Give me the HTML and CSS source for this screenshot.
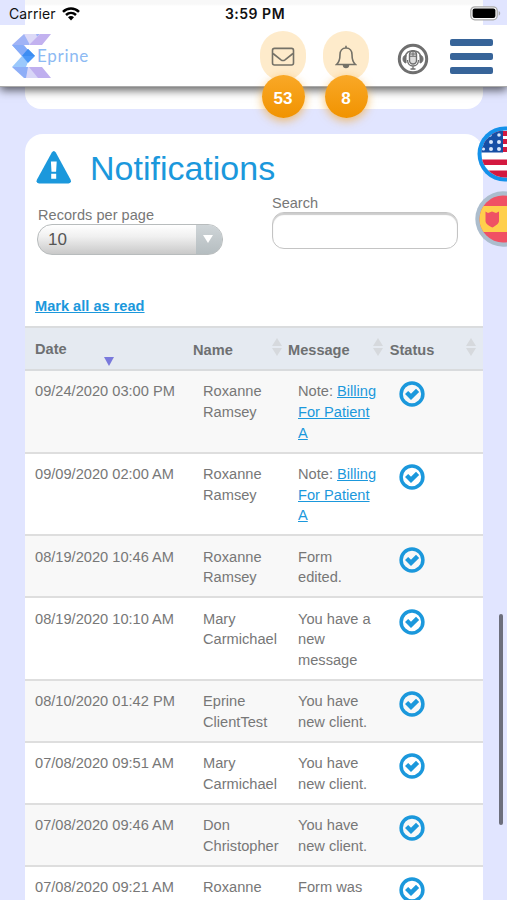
FILE: index.html
```
<!DOCTYPE html>
<html lang="en">
<head>
<meta charset="utf-8">
<title>Eprine - Notifications</title>
<link rel="stylesheet" href="styles.css">
</head>
<body>
<svg class="defs" aria-hidden="true">
  <symbol id="check" viewBox="0 0 26 26"><circle cx="13" cy="13" r="10.9" fill="none" stroke="#1b98dc" stroke-width="3.5"/><path d="M7.600 11.500 12 15.800 18.600 9.400" fill="none" stroke="#1b98dc" stroke-width="4.500"/></symbol>
  <symbol id="sort" viewBox="0 0 10 18"><path d="M5 0 10 8H0zM5 18 0 10h10z" fill="#d6d9dd"/></symbol>
</svg>
<div class="screen">
  <header class="top">
    <div class="status-bar">
      <div class="carrier"><span>Carrier</span>
        <svg width="18" height="14" viewBox="0 0 18 14" fill="none" stroke="#000" stroke-width="2.5"><path d="M1 4.8C5.5.5 12.5.5 17 4.8M4 8c2.900-2.700 7.100-2.700 10 0"/><path d="M6 10.200c1.800-1.500 4.200-1.500 6 0L9 13.400z" fill="#000" stroke="none"/></svg>
      </div>
      <div class="time">3:59 PM</div>
      <svg class="battery" width="31" height="15" viewBox="0 0 31 15"><rect x=".8" y=".8" width="26.400" height="13" rx="4" fill="#fff" stroke="#aaa" stroke-width="1.300"/><rect x="2.600" y="2.600" width="22.800" height="9.400" rx="2"/><path d="M28.700 5v4.600c2-.8 2-3.800 0-4.600z" fill="#aaa"/></svg>
    </div>
    <div class="nav">
      <div class="logo">
        <svg width="40" height="44" viewBox="0 0 40 44">
          <path d="M12 0h16L17 11h-5L16 16 10 22 0 11z" fill="#a0b3f6"/><path d="M12 0 18 11H28L24 0z" fill="#dcd9f7"/><path d="M28 0h11l-9 11H17z" fill="#c2b1ef"/>
          <path d="M0 11 10 22 16 16 11 11z" fill="#86acf8"/><path d="M10 22 0 33h14l2-5z" fill="#9bc9fc"/>
          <path d="M0 33h28v11H12z" fill="#8eaef7"/><path d="M16 33h12v11H14z" fill="#d8d6f7"/><path d="M17 33h13l9 11H26z" fill="#bfafef"/>
          <path d="M10 22 16 15 23 22 16 29z" fill="#4b98f8"/><path d="M16 15 23 22H10z" fill="#3d8df2"/>
        </svg><span>Eprine</span>
      </div>
      <div class="alert mail">
        <svg width="24" height="20" viewBox="0 0 24 20" fill="none" stroke="#747167" stroke-width="1.600"><rect x="1.500" y="1.400" width="21" height="16.600" rx="2"/><path d="m2 6.500 8 6.300q2 1.400 4 0l8-6.300"/></svg>
        <span class="badge">53</span>
      </div>
      <div class="alert bell">
        <svg width="22" height="24" viewBox="0 0 22 24" fill="none" stroke="#747167" stroke-width="1.600"><path d="M11 3C7 3 5 6 5 9.500c0 5.500-1 8-3.500 10h19C18 17.500 17 15 17 9.500 17 6 15 3 11 3z"/><path d="M11 3V.8"/><path d="M8.500 20c.3 3.300 4.700 3.300 5 0z" fill="#747167"/></svg>
        <span class="badge">8</span>
      </div>
      <svg class="mic" width="32" height="32" viewBox="0 0 32 32" fill="none" stroke="#6f6f6f"><circle cx="16" cy="16" r="13.700" stroke-width="3"/><path d="M8.500 14c0-8.500 15-8.500 15 0" stroke-width="1.500"/><path d="M9 12v8c-4-.5-4-7.500 0-8zM23 12v8c4-.5 4-7.500 0-8z" fill="#6f6f6f"/><rect x="12.500" y="8" width="7" height="13" rx="3.500" fill="#ddd" stroke-width="1.400"/><path d="M13 11h6M13 13.300h6M16 8v5" stroke-width="1"/><path d="M10.500 17c0 8 11 8 11 0M16 23v3M13.500 26h5" stroke-width="1.300"/></svg>
      <div class="menu"><i></i><i></i><i></i></div>
    </div>
  </header>

  <nav class="langs">
    <svg width="56" height="56" viewBox="0 0 56 56">
      <defs><clipPath id="round"><circle cx="28" cy="28" r="23.500"/></clipPath></defs>
      <circle cx="28" cy="28" r="27.500" fill="#1491ea"/>
      <g clip-path="url(#round)"><path fill="#fff" d="M0 0h56v56H0z"/><path d="M0 5h56v5H0zM0 13h56v5H0zM0 21h56v5H0zM0 33.500h56v5.500H0zM0 44.500h56V56H0z" fill="#d31940"/><path d="M0 0h26v26.500H0z" fill="#164fa5"/><g fill="#d7e7fb"><circle cx="22" cy="9" r="1.800"/><circle cx="13" cy="9" r="1.800"/><circle cx="22" cy="16" r="2"/><circle cx="14" cy="16" r="2"/><circle cx="22" cy="23" r="2"/><circle cx="14" cy="23" r="2"/><circle cx="6.500" cy="23" r="1.600"/></g></g>
    </svg>
    <svg class="es" width="56" height="56" viewBox="0 0 56 56">
      <circle cx="28" cy="28" r="27.700" fill="#acbdcd"/>
      <g clip-path="url(#round)"><path fill="#f05164" d="M0 0h56v56H0z"/><path fill="#ffcf4c" d="M0 15h56v26H0z"/><path d="M10.500 20.500 13 22l4-1.500 4 1.500 3-1.500V30c0 3-4 5-6.500 6.500C14 35 10.500 33 10.500 30z" fill="#ef5264"/></g>
    </svg>
  </nav>

  <main class="content">
    <section class="card previous"></section>
    <section class="card">
      <h1><svg width="36" height="33" viewBox="0 0 36 33"><path d="M15.800 1.500q2-3 4 0L34.500 28.500q1.500 3.500-2 4H3q-3.500-.5-2-4z" fill="#1b98dc"/><path d="M14.900 10.500h5.800l-.6 10.300h-4.600zM15.200 22.800h5v4.900h-5z" fill="#fff"/></svg><span>Notifications</span></h1>
      <div class="filters">
        <div class="records"><label>Records per page</label>
          <div class="select"><span>10</span><b><svg width="10" height="8" viewBox="0 0 10 8"><path d="M0 0h10L5 8z" fill="#fff"/></svg></b></div>
        </div>
        <div class="search"><label for="q">Search</label><input id="q" type="text"></div>
      </div>
      <a class="mark" href="#">Mark all as read</a>
      <div class="table">
        <div class="head">
          <div class="date">Date<svg width="10" height="9" viewBox="0 0 10 9"><path d="M0 0h10L5 9z" fill="#7979dc"/></svg></div>
          <div>Name<svg class="sort"><use href="#sort"/></svg></div>
          <div>Message<svg class="sort"><use href="#sort"/></svg></div>
          <div>Status<svg class="sort"><use href="#sort"/></svg></div>
        </div>
        <div class="row"><div>09/24/2020 03:00 PM</div><div>Roxanne<br>Ramsey</div><div>Note: <a href="#">Billing<br>For Patient<br>A</a></div><svg class="check"><use href="#check"/></svg></div>
        <div class="row"><div>09/09/2020 02:00 AM</div><div>Roxanne<br>Ramsey</div><div>Note: <a href="#">Billing<br>For Patient<br>A</a></div><svg class="check"><use href="#check"/></svg></div>
        <div class="row"><div>08/19/2020 10:46 AM</div><div>Roxanne<br>Ramsey</div><div>Form<br>edited.</div><svg class="check"><use href="#check"/></svg></div>
        <div class="row"><div>08/19/2020 10:10 AM</div><div>Mary<br>Carmichael</div><div>You have a<br>new<br>message</div><svg class="check"><use href="#check"/></svg></div>
        <div class="row"><div>08/10/2020 01:42 PM</div><div>Eprine<br>ClientTest</div><div>You have<br>new client.</div><svg class="check"><use href="#check"/></svg></div>
        <div class="row"><div>07/08/2020 09:51 AM</div><div>Mary<br>Carmichael</div><div>You have<br>new client.</div><svg class="check"><use href="#check"/></svg></div>
        <div class="row"><div>07/08/2020 09:46 AM</div><div>Don<br>Christopher</div><div>You have<br>new client.</div><svg class="check"><use href="#check"/></svg></div>
        <div class="row"><div>07/08/2020 09:21 AM</div><div>Roxanne</div><div>Form was</div><svg class="check"><use href="#check"/></svg></div>
      </div>
    </section>
  </main>
  <div class="scrollbar"></div>
</div>
</body>
</html>
```

FILE: styles.css
```
* { box-sizing: border-box; }
body { margin: 0; font-family: "Liberation Sans", Arial, sans-serif; color: #777; }
svg { display: block; flex: none; }
.defs { position: absolute; width: 0; height: 0; }
.screen { position: relative; height: 900px; overflow: hidden; background: #e1e5ff; }

.top { position: absolute; z-index: 2; top: 0; left: 0; right: 0; height: 87px; }
.status-bar {
  position: relative; z-index: 1;
  height: 25px; padding: 2px 6px 0 9px;
  display: grid; grid-template-columns: 1fr auto 1fr; align-items: center;
  background: linear-gradient(#f8f8f8 4px, #fff 6px) 25px 0 / 458px 25px no-repeat #e1e5ff;
  color: #111; font-family: Inter, sans-serif;
}
.carrier { display: flex; align-items: center; gap: 6px; font-size: 14px; letter-spacing: .1px; }
.time { font-size: 14px; font-weight: 600; letter-spacing: .5px; }
.battery { justify-self: end; }
.nav { height: 62px; display: flex; background: #fff; box-shadow: 0 3px 9px rgba(0, 0, 0, .65); border-bottom: 1px solid #aaa; }
.logo { display: flex; width: 248px; padding: 9px 0 0 12px; }
.logo span { margin: 10px 0 0 -15px; font: 400 17px/24px Lato, sans-serif; letter-spacing: .7px; color: #8dbaf3; }
.alert { position: relative; width: 46px; height: 50px; margin: 6px 17px 0 0; border-radius: 23px; background: #feebcb; display: flex; justify-content: center; align-items: flex-start; }
.mail { margin-left: 12px; }
.mail > svg { margin-top: 16px; }
.bell > svg { margin-top: 14px; }
.badge {
  position: absolute; top: 44px; left: 1.500px; width: 43px; height: 43px; border-radius: 50%;
  background: linear-gradient(#f9a827, #f19300); box-shadow: 0 3px 10px rgba(245, 165, 40, .65);
  color: #fff; font-weight: 700; font-size: 17px; line-height: 48px; text-align: center;
}
.mic { margin: 18px 0 0 11px; }
.menu { width: 43px; margin: 14px 0 0 21px; display: flex; flex-direction: column; gap: 7px; }
.menu i { height: 7px; border-radius: 2px; background: #376499; }

.langs { position: absolute; z-index: 1; top: 126px; left: 477px; width: 56px; }
.langs .es { margin: 9px 0 0 -2px; }

.content { padding: 0 24px 0 25px; }
.card { background: #fff; border-radius: 18px 18px 0 0; height: 800px; }
.previous { height: 109px; margin-bottom: 25px; border-radius: 0 0 16px 16px; }
h1 { margin: 0; height: 62px; padding: 15px 0 0 11px; display: flex; gap: 18px; color: #1b98dc; font-weight: 400; font-size: 34px; line-height: 38px; }
h1 svg { margin-top: 2px; }
.filters { display: flex; gap: 49px; padding-left: 12px; }
.filters label { display: block; font-size: 14.500px; line-height: 15px; }
.records { width: 186px; padding-top: 12px; }
.records label { padding-left: 1px; letter-spacing: .05px; }
.search { width: 186px; }
.search input { display: block; width: 186px; height: 37px; margin: 1px 0 0; border: 1.500px solid #c4c4c4; border-radius: 12px; background: #fff; box-shadow: inset 0 2px 1px #ccc; }
.select { display: flex; justify-content: space-between; height: 31px; margin-top: 1px; border: 1px solid #b8bcbd; border-radius: 15px; overflow: hidden; background: linear-gradient(#fff, #f0f0f0 40%, #c9c9c9); }
.select span { padding-left: 10px; font-size: 17px; line-height: 30px; color: #555; }
.select b { width: 26px; padding: 10px 0 0 7px; background: linear-gradient(#cfd5d8, #b5bdc0); }
.mark { display: block; width: 110px; margin: 42px 0 0 10px; height: 29px; font-size: 14.600px; font-weight: 700; line-height: 18px; white-space: nowrap; }
a { color: #1b98dc; text-decoration: underline; text-underline-offset: 1px; text-decoration-thickness: 1px; }

.head, .row { display: grid; grid-template-columns: 168px 95px 101px 94px; }
.head { height: 45px; border-top: 2px solid #dadcde; border-bottom: 2px solid #d9dbdd; background: #e5eaf1; font-size: 14.600px; font-weight: 700; line-height: 20px; color: #6e7072; }
.head div { display: flex; justify-content: space-between; padding-top: 12px; }
.head .date { flex-direction: column; justify-content: flex-start; padding: 11px 0 0 10px; }
.date svg { margin: -2px 0 0 69px; }
.sort { width: 10px; height: 18px; margin: -2px 6px 0 0; }
.head div:nth-child(4) { padding-left: .7px; }
.head div:nth-child(4) .sort { margin-right: 7px; }
.row { padding: 10.400px 0 8.300px; border-bottom: 2px solid #dedede; font-size: 14.640px; line-height: 20.650px; }
.row:nth-child(even) { background: #f8f8f8; }
.row > div { padding-left: 10px; white-space: nowrap; }
.check { width: 26px; height: 26px; margin: 0 0 0 10px; }
.scrollbar { position: absolute; z-index: 3; left: 499px; top: 614px; width: 4px; height: 211px; border-radius: 2px; background: #6c6e7c; }
```
